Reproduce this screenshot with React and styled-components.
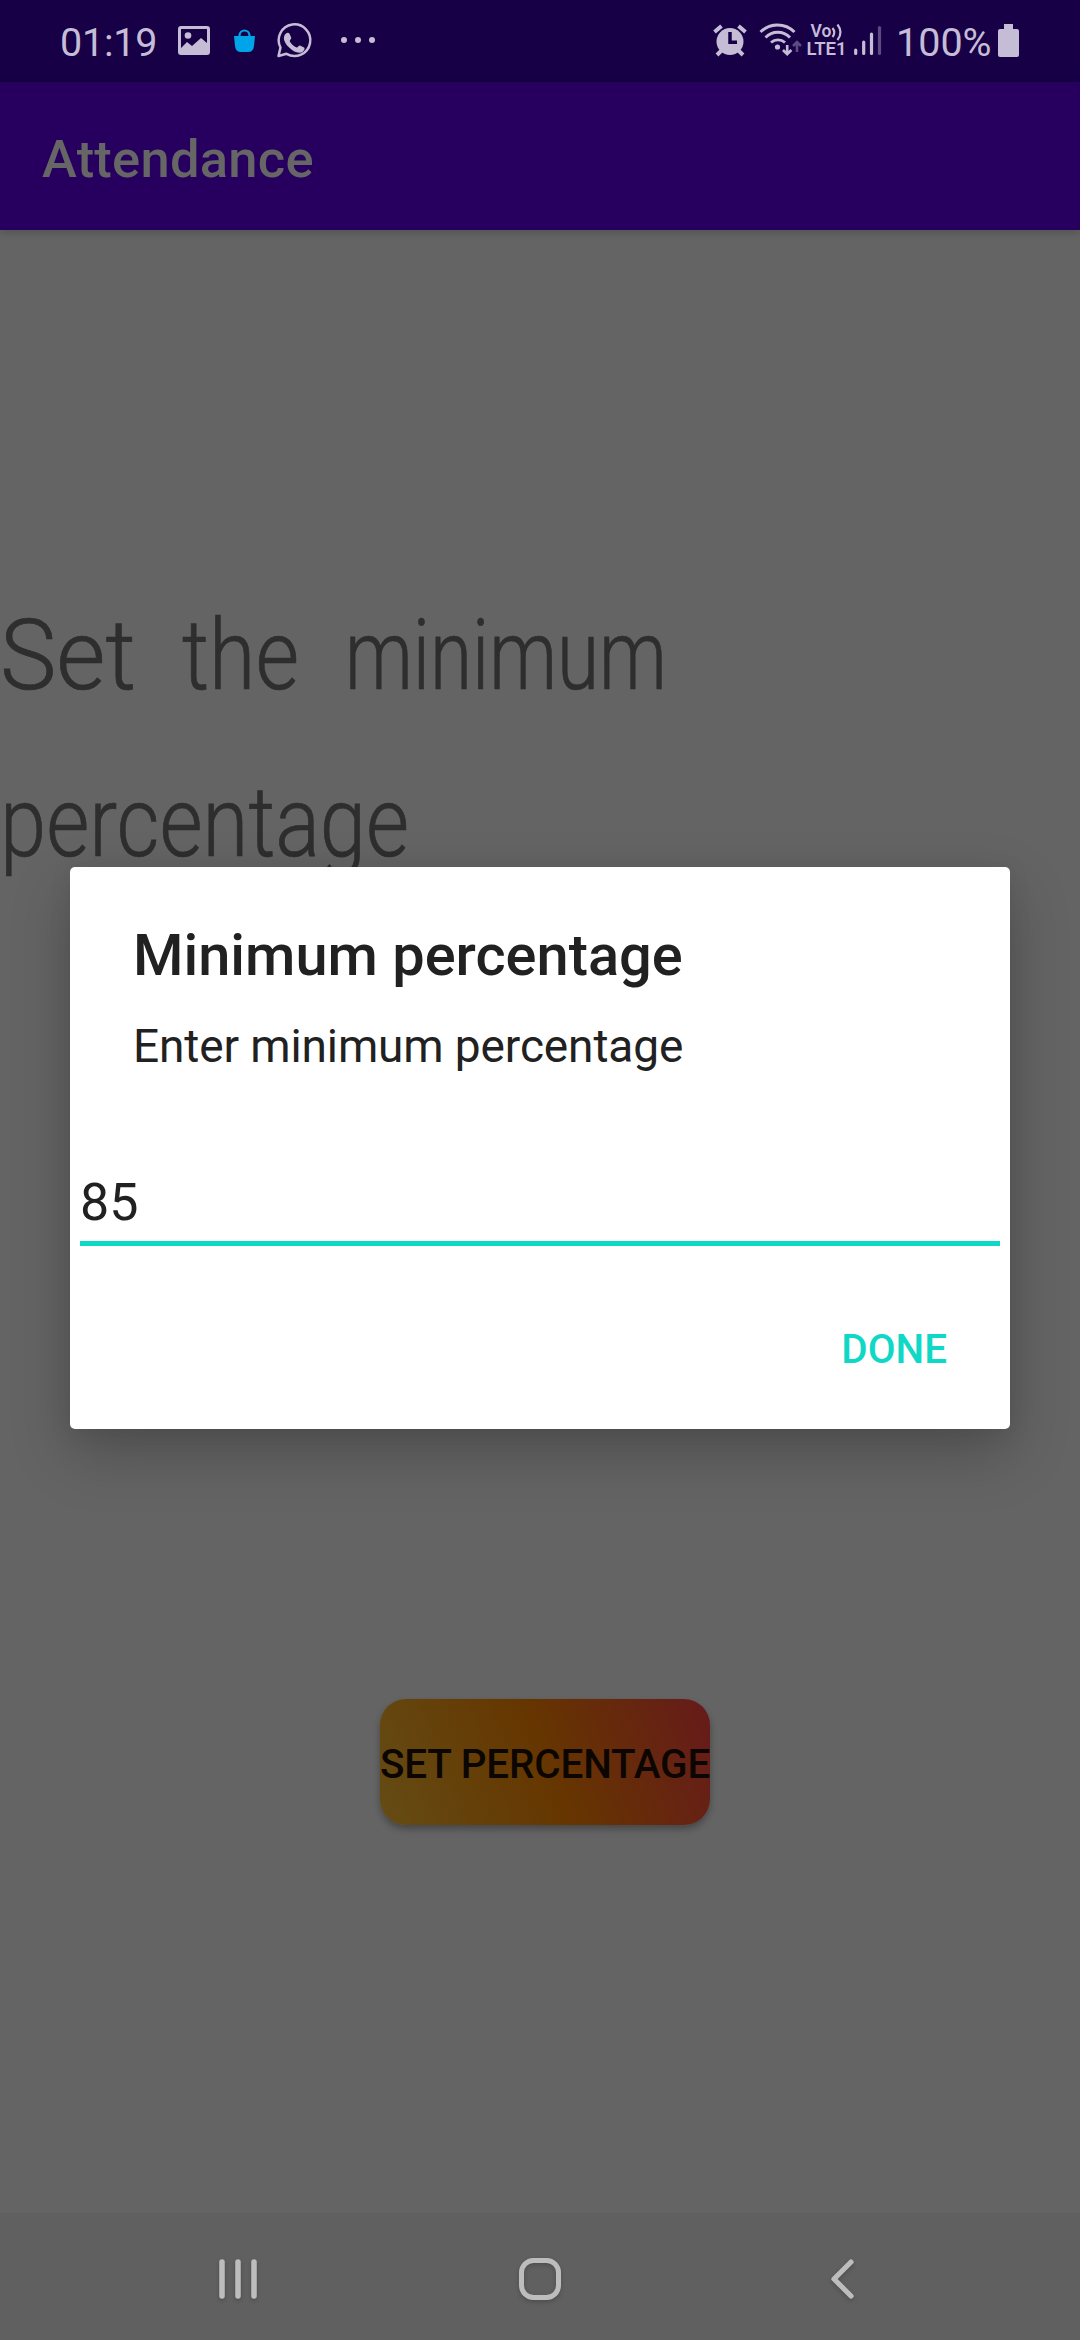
import React from "react";
import styled, { createGlobalStyle } from "styled-components";

const Global = createGlobalStyle`
  *, *::before, *::after { box-sizing: border-box; }
  html, body { margin: 0; padding: 0; background: #646464; }
  body { width: 1080px; height: 2340px; overflow: hidden; font-family: Roboto, "Liberation Sans", sans-serif; }
`;

const Screen = styled.div`
  position: relative;
  display: flex;
  flex-direction: column;
  width: 1080px;
  height: 2340px;
  overflow: hidden;
  background: #646464;
`;

const StatusBar = styled.header`
  display: flex;
  justify-content: space-between;
  height: 82px;
  padding: 0 57px 0 60px;
  background: #170046;
  color: #c5bcd6;
`;

const StatusGroup = styled.div`
  display: flex;
  align-items: center;
`;

const StatusText = styled.span`
  width: ${(p) => p.$width}px;
  padding-top: 4px;
  font-size: 39.5px;
  line-height: 46px;
  letter-spacing: ${(p) => p.$spacing || 0}px;
  white-space: nowrap;
`;

const AppBar = styled.div`
  position: relative;
  display: flex;
  align-items: center;
  height: 148px;
  padding: 5px 42px 0;
  background: #27005f;
  box-shadow: 0 2px 8px rgba(0, 0, 0, 0.2);
`;

const AppTitle = styled.h1`
  margin: 0;
  font-size: 52.5px;
  font-weight: 500;
  line-height: 62px;
  letter-spacing: 0.25px;
  color: #666666;
`;

const Content = styled.main`
  flex: 1;
  display: flex;
  flex-direction: column;
  align-items: flex-start;
  padding-top: 342px;
`;

const Prompt = styled.h2`
  display: flex;
  flex-direction: column;
  align-items: flex-start;
  margin: 0;
  height: 1127px;
  font-size: 98px;
  font-weight: 300;
  line-height: 167px;
  color: #2e2e2e;
  -webkit-text-stroke: 0.7px #2e2e2e;
`;

const PromptLine = styled.span`
  display: flex;
  white-space: pre;
`;

const Word = styled.span`
  width: ${(p) => p.$width}px;
  transform: scaleX(${(p) => p.$stretch});
  transform-origin: left center;
`;

const GradientButton = styled.button`
  display: flex;
  align-items: center;
  justify-content: center;
  width: 330px;
  height: 126px;
  margin-left: 380px;
  padding: 4px 0 0;
  border: 0;
  border-radius: 26px;
  background: linear-gradient(69deg, #644c14, #663600 50%, #661a1a);
  box-shadow: 0 4px 7px rgba(0, 0, 0, 0.3);
  font-family: inherit;
  font-size: 40.4px;
  font-weight: 500;
  letter-spacing: -0.15px;
  color: #0c0602;
  white-space: nowrap;
`;

const NavBar = styled.nav`
  display: flex;
  height: 127px;
  background: #606060;
`;

const NavDrawing = styled.svg`
  width: 1080px;
  height: 127px;
  filter: drop-shadow(0 2px 2px rgba(0, 0, 0, 0.2));
`;

const Overlay = styled.div`
  position: absolute;
  inset: 0;
  display: flex;
  flex-direction: column;
  align-items: center;
  padding-top: 867px;
`;

const Dialog = styled.section`
  display: flex;
  flex-direction: column;
  width: 940px;
  height: 562px;
  border-radius: 5px;
  background: #ffffff;
  color: #212121;
  box-shadow: 0 24px 60px rgba(0, 0, 0, 0.22), 0 4px 24px rgba(0, 0, 0, 0.07);
`;

const DialogTitle = styled.h3`
  margin: 0;
  padding: 54px 63px 0;
  font-size: 57.75px;
  font-weight: 500;
  line-height: 68px;
`;

const DialogMessage = styled.p`
  margin: 0;
  padding: 30px 63px 0;
  font-size: 46px;
  line-height: 54px;
  letter-spacing: -0.12px;
`;

const Field = styled.div`
  margin: 94px 10px 0;
  height: 79px;
  padding-top: 5px;
  border-bottom: 5px solid #0fd8c6;
  font-size: 52px;
  line-height: 62px;
`;

const Actions = styled.div`
  display: flex;
  justify-content: flex-end;
  padding: 80px 63px 0;
`;

const TextButton = styled.button`
  padding: 0;
  border: 0;
  background: none;
  font-family: inherit;
  font-size: 40.4px;
  font-weight: 500;
  line-height: 48px;
  color: #0fd8c6;
`;

function Glyph({ x, w, y = 0, h = 82, children }) {
  return (
    <svg width={w} height={h} viewBox={`${x} ${y} ${w} ${h}`} fill="currentColor" aria-hidden="true">
      {children}
    </svg>
  );
}

const NotificationIcons = () => (
  <Glyph x={170} w={210}>
    <path fillRule="evenodd" d="M181 26h26a3 3 0 0 1 3 3v23a3 3 0 0 1-3 3h-26a3 3 0 0 1-3-3V29a3 3 0 0 1 3-3zm0 3v19l6-6 5 4 9-8 6 5V29z" />
    <circle cx="188" cy="35.5" r="3.3" />
    <path fill="#00a4e8" d="M234 36h21l-1 10q-.6 6-6 6h-7q-5.400 0-6-6z" />
    <path fill="none" stroke="#00a4e8" strokeWidth="2.2" d="M239.500 37v-1.500a5 5 0 0 1 10 0V37" />
    <path fill="none" stroke="currentColor" strokeWidth="2.500" strokeLinejoin="round" d="M278.500 56l2-8.500a15.800 15.800 0 1 1 6 6.300z" />
    <path d="M285.500 34c1.600-1.600 3.200-1.500 4-.2l1.700 3.800c.5 1.200-1.700 2.900-1.500 3.700 1.600 3 4 5 7 6.300.9.2 2.300-2.400 3.300-2l4 2c1.300.8.1 3.300-1.400 4.300-3 1.800-7 .4-10.500-2-3.700-2.600-7-6.300-8-10-.5-2.500.1-4.600 1.400-5.900z" />
    <circle cx="344" cy="40" r="3" />
    <circle cx="358" cy="40" r="3" />
    <circle cx="372" cy="40" r="3" />
  </Glyph>
);

const SystemIcons = () => (
  <Glyph x={704} w={192}>
    <g fill="none" stroke="currentColor">
      <path strokeWidth="4" d="M714.500 32l7-6M745.500 32l-7-6M717 55l5-5M743 55l-5-5" />
      <path strokeWidth="2.900" d="M760.500 32a24 24 0 0 1 34 0M765.500 37.500a17 17 0 0 1 24.500 0M771 42.500a10.500 10.500 0 0 1 14 0" />
      <path strokeWidth="2.600" d="M787.200 45v9M783 50l4.200 4.200 4.200-4.200" />
      <path strokeWidth="2.600" opacity="0.400" d="M797 52v-10M793 46l4-4 4 4" />
      <path strokeWidth="2.200" d="M832.500 28q3.600 4.500 0 9M837.500 24.500q6 8 0 15.500" />
    </g>
    <circle cx="730" cy="41.500" r="13.500" />
    <path fill="none" stroke="#170046" strokeWidth="3.500" d="M730 32v10.200h7" />
    <circle cx="777.500" cy="47" r="2.600" />
    <text x="810.500" y="37" fontSize="17.500" fontWeight="600" textLength="21">Vo</text>
    <text x="806.500" y="54.900" fontSize="18.500" fontWeight="600" textLength="40">LTE1</text>
    <g fill="none" stroke="currentColor" strokeWidth="3.200" strokeLinecap="round">
      <path d="M855.700 50v3.500M863.700 42v11.500M871.500 34v19.500" />
      <path opacity="0.400" d="M879.500 27.500v26" />
    </g>
  </Glyph>
);

const BatteryIcon = () => (
  <Glyph x={994} w={29}>
    <path d="M1004 24h9v5h4q2 0 2 2v24q0 2-2 2h-17q-2 0-2-2V31q0-2 2-2h4z" />
  </Glyph>
);

const NavigationIcons = () => (
  <NavDrawing viewBox="0 2213 1080 127" fill="none" stroke="#bdbdbd" strokeLinecap="round" strokeLinejoin="round" aria-hidden="true">
    <path strokeWidth="5.500" d="M222 2262v34M238 2262v34M254 2262v34" />
    <rect x="521.500" y="2260.500" width="37" height="37" rx="12" strokeWidth="5" />
    <path strokeWidth="5.200" d="M851 2262l-17 17 17 17" />
  </NavDrawing>
);

export default function App() {
  return (
    <Screen>
      <Global />
      <StatusBar>
        <StatusGroup>
          <StatusText $width={110} $spacing={-0.2}>01:19</StatusText>
          <NotificationIcons />
        </StatusGroup>
        <StatusGroup>
          <SystemIcons />
          <StatusText $width={98}>100%</StatusText>
          <BatteryIcon />
        </StatusGroup>
      </StatusBar>
      <AppBar>
        <AppTitle>Attendance</AppTitle>
      </AppBar>
      <Content>
        <Prompt>
          <PromptLine>
            <Word $width={182} $stretch={0.97}>Set </Word>
            <Word $width={163} $stretch={0.86}>the </Word>
            <Word $width={420} $stretch={0.78}>minimum</Word>
          </PromptLine>
          <PromptLine>
            <Word $width={480} $stretch={0.85}>percentage</Word>
          </PromptLine>
        </Prompt>
        <GradientButton>SET PERCENTAGE</GradientButton>
      </Content>
      <NavBar>
        <NavigationIcons />
      </NavBar>
      <Overlay>
        <Dialog role="dialog">
          <DialogTitle>Minimum percentage</DialogTitle>
          <DialogMessage>Enter minimum percentage</DialogMessage>
          <Field>85</Field>
          <Actions>
            <TextButton>DONE</TextButton>
          </Actions>
        </Dialog>
      </Overlay>
    </Screen>
  );
}
